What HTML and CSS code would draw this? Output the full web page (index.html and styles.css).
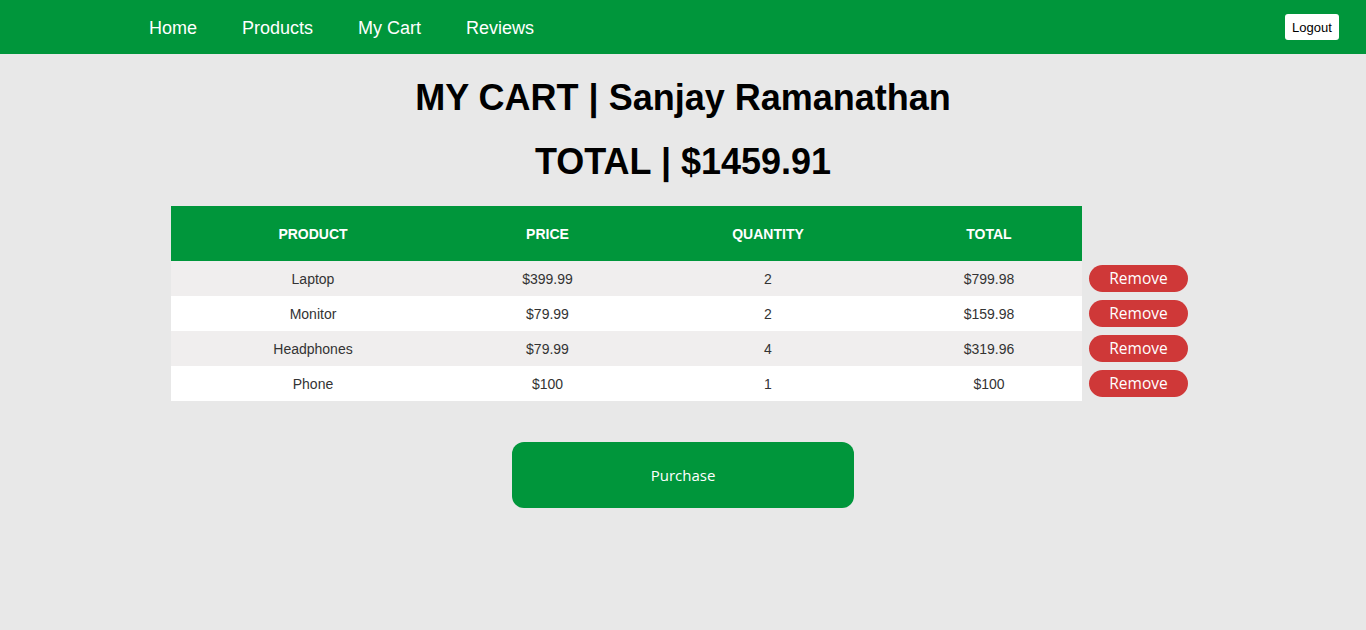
FILE: index.html
```html
<!DOCTYPE html>
<html lang="en">
<head>
<meta charset="utf-8">
<title>My Cart</title>
<link rel="stylesheet" href="styles.css">
</head>
<body>
<nav class="navbar">
  <ul class="nav-links">
    <li><a href="#">Home</a></li>
    <li><a href="#">Products</a></li>
    <li><a href="#">My Cart</a></li>
    <li><a href="#">Reviews</a></li>
  </ul>
  <button class="logout">Logout</button>
</nav>
<main class="main">
  <h1 class="title">MY CART | Sanjay Ramanathan</h1>
  <h1 class="title total">TOTAL | $1459.91</h1>
  <div class="cart-wrap">
    <table class="cart">
      <colgroup>
        <col class="c-product">
        <col class="c-price">
        <col class="c-qty">
        <col class="c-total">
        <col class="c-action">
      </colgroup>
      <thead>
        <tr>
          <th>PRODUCT</th>
          <th>PRICE</th>
          <th>QUANTITY</th>
          <th>TOTAL</th>
          <th class="action-head"></th>
        </tr>
      </thead>
      <tbody>
        <tr>
          <td>Laptop</td><td>$399.99</td><td>2</td><td>$799.98</td>
          <td class="action"><button class="remove">Remove</button></td>
        </tr>
        <tr>
          <td>Monitor</td><td>$79.99</td><td>2</td><td>$159.98</td>
          <td class="action"><button class="remove">Remove</button></td>
        </tr>
        <tr>
          <td>Headphones</td><td>$79.99</td><td>4</td><td>$319.96</td>
          <td class="action"><button class="remove">Remove</button></td>
        </tr>
        <tr>
          <td>Phone</td><td>$100</td><td>1</td><td>$100</td>
          <td class="action"><button class="remove">Remove</button></td>
        </tr>
      </tbody>
    </table>
  </div>
  <div class="purchase-row">
    <button class="purchase">Purchase</button>
  </div>
</main>
</body>
</html>
```
FILE: styles.css
```css
* { box-sizing: border-box; }

html, body {
  margin: 0;
  padding: 0;
  background: #e8e8e8;
  font-family: "Liberation Sans", Arial, sans-serif;
}

.navbar {
  height: 54px;
  background: #00963b;
  display: flex;
  align-items: center;
  justify-content: space-between;
  padding: 0 27px 0 149px;
}

.nav-links {
  list-style: none;
  margin: 0;
  padding: 0;
  display: flex;
  gap: 45px;
}

.nav-links a {
  color: #ffffff;
  text-decoration: none;
  font-size: 18px;
  line-height: 22px;
  display: block;
  padding-top: 1px;
}

.logout {
  background: #ffffff;
  border: none;
  border-radius: 3px;
  height: 26px;
  width: 54px;
  padding: 0;
  font-family: "Liberation Sans", Arial, sans-serif;
  font-size: 13px;
  color: #000;
}

.main {
  padding-top: 23px;
}

.title {
  margin: 0;
  text-align: center;
  font-size: 36px;
  line-height: 41px;
  font-weight: bold;
  color: #000;
}

.title.total {
  margin-top: 23px;
}

.cart-wrap {
  width: 1024px;
  margin: 24px auto 0;
}

.cart {
  width: 1017px;
  border-collapse: collapse;
  table-layout: fixed;
}

.c-product { width: 284px; }
.c-price { width: 185px; }
.c-qty { width: 256px; }
.c-total { width: 186px; }
.c-action { width: 106px; }

.cart th {
  height: 55px;
  background: #00963b;
  color: #ffffff;
  font-size: 14px;
  font-weight: bold;
  text-align: center;
  padding: 1px 0 0;
}

.cart th.action-head {
  background: transparent;
}

.cart td {
  height: 35px;
  padding: 0;
  text-align: center;
  font-size: 14px;
  color: #333333;
}

.cart tbody tr:nth-child(odd) td { background: #f0eeee; }
.cart tbody tr:nth-child(even) td { background: #ffffff; }
.cart tbody tr td.action { background: transparent; text-align: left; padding-left: 7px; }

.remove {
  width: 99px;
  height: 27px;
  border: none;
  border-radius: 14px;
  background: #cf3838;
  color: #ffffff;
  font-family: "Open Sans", "Noto Sans", sans-serif;
  font-size: 15.5px;
  line-height: 27px;
  padding: 0;
  display: block;
}

.purchase-row {
  display: flex;
  justify-content: center;
  margin-top: 41px;
}

.purchase {
  width: 342px;
  height: 66px;
  border: none;
  border-radius: 12px;
  background: #00963b;
  color: #ffffff;
  font-family: "Open Sans", "Noto Sans", sans-serif;
  font-size: 15px;
  padding: 0;
}
```
